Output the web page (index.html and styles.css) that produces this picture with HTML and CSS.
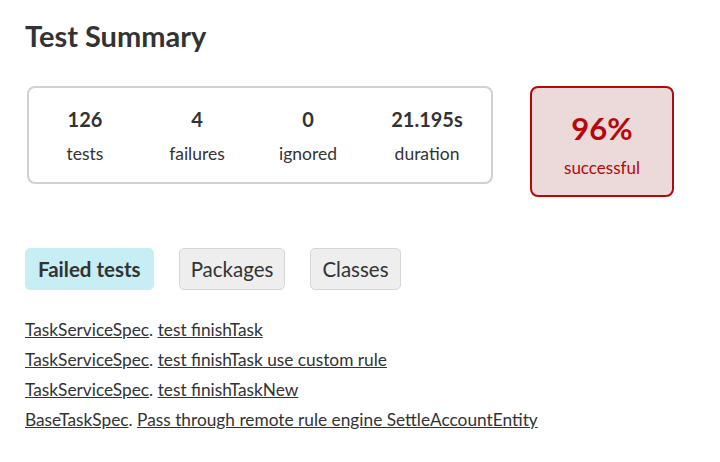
FILE: index.html
```html
<!DOCTYPE html>
<html>
<head>
<meta charset="utf-8">
<link rel="stylesheet" href="styles.css">
</head>
<body>
<div class="content">
  <h1 class="title">Test Summary</h1>
  <div class="summary">
    <div class="counters">
      <div class="counter"><div class="num">126</div><div class="lbl">tests</div></div>
      <div class="counter"><div class="num">4</div><div class="lbl">failures</div></div>
      <div class="counter"><div class="num">0</div><div class="lbl">ignored</div></div>
      <div class="counter"><div class="num">21.195s</div><div class="lbl">duration</div></div>
    </div>
    <div class="success">
      <div class="pct">96%</div>
      <div class="slbl">successful</div>
    </div>
  </div>
  <div class="tabs">
    <span class="tab active">Failed tests</span>
    <span class="tab">Packages</span>
    <span class="tab">Classes</span>
  </div>
  <ul class="failed">
    <li><a href="#">TaskServiceSpec</a>. <a href="#">test finishTask</a></li>
    <li><a href="#">TaskServiceSpec</a>. <a href="#">test finishTask use custom rule</a></li>
    <li><a href="#">TaskServiceSpec</a>. <a href="#">test finishTaskNew</a></li>
    <li><a href="#">BaseTaskSpec</a>. <a href="#">Pass through remote rule engine SettleAccountEntity</a></li>
  </ul>
</div>
</body>
</html>
```
FILE: styles.css
```css
html, body { margin: 0; padding: 0; background: #fff; }
body { font-family: "Lato", "Liberation Sans", sans-serif; color: #333; }
.content { padding: 19px 25px; }
.title { margin: 0; font-size: 29px; font-weight: 700; line-height: 34px; color: #333; }
.summary { display: flex; align-items: flex-start; margin-top: 33px; }
.counters { display: grid; grid-template-columns: 112px 112px 110px 128px; align-content: start; box-sizing: border-box; width: 466px; height: 98px; padding-top: 19px; border: 2px solid #d0d0d0; border-radius: 8px; margin-left: 2px; }
.counter { text-align: center; }
.num { font-size: 20px; font-weight: 700; line-height: 24px; }
.lbl { font-size: 17.5px; line-height: 22px; margin-top: 12px; }
.success { margin-left: 37px; margin-top: 0; width: 144px; height: 111px; border: 2px solid #b60808; border-radius: 8px; background: #ecd9da; color: #b60808; text-align: center; box-sizing: border-box; padding-top: 21px; }
.pct { font-size: 31px; font-weight: 700; line-height: 38px; }
.slbl { font-size: 17px; line-height: 22px; margin-top: 10px; }
.tabs { display: flex; gap: 25px; margin-top: 51px; }
.tab { font-size: 20.5px; line-height: 40px; height: 42px; padding: 0 11px; box-sizing: border-box; border: 1px solid #d6d6d6; border-radius: 5px; background: #eeeeee; }
.tab.active { background: #c6eef4; border-color: #c6eef4; font-weight: 700; padding: 0 12px; }
.failed { list-style: none; margin: 25px 0 0; padding: 0; }
.failed li { font-size: 17.3px; line-height: 30px; }
.failed a { color: #333; text-decoration: underline; }
```
